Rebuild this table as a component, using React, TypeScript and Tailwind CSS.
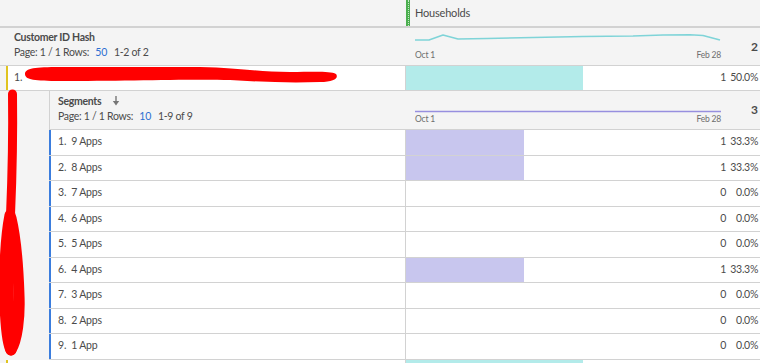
import React from 'react'

interface SegmentRow {
    name: string
    value: number
    pct: number
}

const segments: SegmentRow[] = [
    { name: '9 Apps', value: 1, pct: 33.3 },
    { name: '8 Apps', value: 1, pct: 33.3 },
    { name: '7 Apps', value: 0, pct: 0 },
    { name: '6 Apps', value: 0, pct: 0 },
    { name: '5 Apps', value: 0, pct: 0 },
    { name: '4 Apps', value: 1, pct: 33.3 },
    { name: '3 Apps', value: 0, pct: 0 },
    { name: '2 Apps', value: 0, pct: 0 },
    { name: '1 App', value: 0, pct: 0 },
]

// points of the households trend, x over a 306px wide box
const trend = '0,8 14,8 28,3 43,7 72,6.5 118,5.5 168,4.5 218,4 248,3 275,2.8 288,3.5 305,8'

function MetricCell({ pct, value, color, showText = true }: { pct: number; value: number; color: string; showText?: boolean }) {
    return (
        <div className="w-[354px] shrink-0 flex items-stretch bg-white">
            <div className={color} style={{ width: `${pct}%` }} />
            <div className="flex-1" />
            {showText && (
                <div className="flex items-center text-[10.5px] tracking-[-0.3px] text-[#4b4b4b]">
                    <span className="text-right mr-[4px]">{value}</span>
                    <span className="w-[30px] text-right pr-[2px] whitespace-nowrap">{pct.toFixed(1)}%</span>
                </div>
            )}
        </div>
    )
}

function Pager({ rows, range }: { rows: number; range: string }) {
    return (
        <div className="text-[10.5px] leading-[14px] tracking-[-0.3px] text-[#4b4b4b] whitespace-nowrap">
            Page: 1 / 1 Rows: <span className="text-[#2d6fd1] ml-[4px]">{rows}</span>
            <span className="ml-[7px]">{range}</span>
        </div>
    )
}

function DateAxis() {
    return (
        <div className="flex justify-between text-[8.5px] leading-[12px] tracking-[-0.2px] text-[#6e6e6e]">
            <span>Oct 1</span>
            <span>Feb 28</span>
        </div>
    )
}

export default function App() {
    return (
        <div className="relative w-[760px] h-[363px] overflow-hidden bg-[#f4f4f4] font-['Lato',sans-serif] text-[#4b4b4b]">
            {/* Column header */}
            <div className="flex h-[28px] border-b-2 border-[#d2d2d2]">
                <div className="w-[406px] shrink-0" />
                <div className="flex items-stretch flex-1">
                    <div className="w-[4px] bg-[#4caf50] flex justify-center">
                        <div className="border-l border-dotted border-[#c8e8c9]" />
                    </div>
                    <span className="ml-[5px] self-center text-[11px] tracking-[-0.2px]">Households</span>
                </div>
            </div>

            {/* Dimension header */}
            <div className="flex h-[38px] border-b border-[#d2d2d2]">
                <div className="w-[406px] shrink-0 pl-[14px] pt-[1px]">
                    <div className="text-[10.5px] leading-[16px] tracking-[-0.3px] font-bold">Customer ID Hash</div>
                    <Pager rows={50} range="1-2 of 2" />
                </div>
                <div className="flex flex-1">
                    <div className="w-[306px] ml-[9px] flex flex-col justify-end pb-[4px]">
                        <svg width="306" height="17" viewBox="0 0 306 17" className="block">
                            <polyline points={trend} fill="none" stroke="#7fd4d8" strokeWidth="1.5" strokeLinejoin="round" />
                        </svg>
                        <DateAxis />
                    </div>
                    <div className="flex-1 flex items-center justify-end pr-[2px] text-[12px] font-bold">2</div>
                </div>
            </div>

            {/* Customer row */}
            <div className="flex h-[25px] border-b border-[#d2d2d2]">
                <div className="w-[6px] shrink-0" />
                <div className="flex-1 flex items-center bg-white border-l-2 border-l-[#e0c420] border-r border-r-[#d2d2d2] pl-[6px] text-[10.5px]">
                    1.
                </div>
                <MetricCell pct={50} value={1} color="bg-[#b3ebea]" />
            </div>

            {/* Breakdown header */}
            <div className="flex h-[39px]">
                <div className="w-[49px] shrink-0" />
                <div className="flex flex-1 border-l border-b border-[#d2d2d2]">
                    <div className="flex-1 pl-[8px] pt-[2px]">
                        <div className="flex items-center gap-[11px] text-[10.5px] leading-[16px] tracking-[-0.3px] font-bold">
                            Segments
                            <svg width="8" height="10" viewBox="0 0 8 10">
                                <path d="M4 0 V6" stroke="#767676" strokeWidth="1.4" />
                                <path d="M0.8 5 H7.2 L4 9.5 Z" fill="#767676" />
                            </svg>
                        </div>
                        <Pager rows={10} range="1-9 of 9" />
                    </div>
                    <div className="w-[354px] shrink-0 flex">
                        <div className="w-[306px] ml-[9px] flex flex-col justify-end pb-[4px]">
                            <svg width="306" height="10" viewBox="0 0 306 10" className="block">
                                <line x1="0" y1="8.5" x2="306" y2="8.5" stroke="#978fdf" strokeWidth="1.5" />
                            </svg>
                            <DateAxis />
                        </div>
                        <div className="flex-1 flex items-center justify-end pr-[2px] text-[12px] font-bold">3</div>
                    </div>
                </div>
            </div>

            {/* Breakdown rows */}
            {segments.map((seg, i) => (
                <div key={seg.name} className="flex h-[25.5px]">
                    <div className="w-[49px] shrink-0" />
                    <div className="flex flex-1 border-b border-[#d2d2d2]">
                        <div className="flex-1 flex items-center bg-white border-l-2 border-l-[#3b7ddd] border-r border-r-[#d2d2d2] pl-[7px] text-[10.5px] tracking-[-0.2px]">
                            <span>{i + 1}.</span>
                            <span className="ml-[5px]">{seg.name}</span>
                        </div>
                        <MetricCell pct={seg.pct} value={seg.value} color="bg-[#c8c6ee]" />
                    </div>
                </div>
            ))}

            {/* Next customer row, cut off by the viewport */}
            <div className="flex h-[25px] border-b border-[#d2d2d2]">
                <div className="w-[6px] shrink-0" />
                <div className="flex-1 bg-white border-l-2 border-l-[#e0c420] border-r border-r-[#d2d2d2]" />
                <MetricCell pct={50} value={1} color="bg-[#b3ebea]" showText={false} />
            </div>

            {/* Redaction marks */}
            <svg className="absolute inset-0 pointer-events-none" width="760" height="363" viewBox="0 0 760 363">
                <path
                    d="M25 74 C25 68 35 67 60 67 L200 67 C240 68 260 72 290 72 C315 72 330 71 336 74 C339 78 334 82 320 82 C290 83 260 82 230 80 C190 79 120 81 60 81 C35 81 25 80 25 74 Z"
                    fill="#ff0000"
                />
                <g fill="none" stroke="#ff0000" strokeLinecap="round">
                    <path d="M12.5 94 C13 130 12 180 10.5 215" strokeWidth="9" />
                    <path d="M10 215 C5 240 4 280 5 305 C6 330 8 345 11 350" strokeWidth="11" />
                    <path d="M11 350 C17 340 20 318 19 295 C18 265 15 235 11 218" strokeWidth="11" />
                    <path d="M11.5 226 C9 260 10 300 12 335" strokeWidth="7" />
                </g>
            </svg>
        </div>
    )
}
